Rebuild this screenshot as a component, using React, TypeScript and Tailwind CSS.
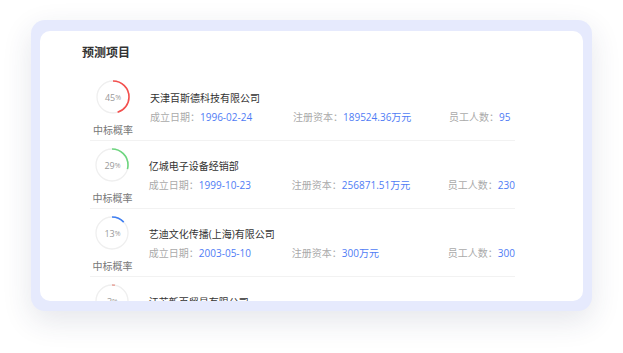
import React from "react";

type Row = {
  pct: number;
  color: string;
  name: string;
  date: string;
  capital: string;
  staff: string;
};

const rows: Row[] = [
  { pct: 45, color: "#f4504e", name: "天津百斯德科技有限公司", date: "1996-02-24", capital: "189524.36万元", staff: "95" },
  { pct: 29, color: "#6dd67f", name: "亿城电子设备经销部", date: "1999-10-23", capital: "256871.51万元", staff: "230" },
  { pct: 13, color: "#3f7ff2", name: "艺迪文化传播(上海)有限公司", date: "2003-05-10", capital: "300万元", staff: "300" },
  { pct: 3, color: "#e8a39a", name: "江苏新百贸易有限公司", date: "2005-08-16", capital: "5000万元", staff: "120" },
];

function Ring({ pct, color }: { pct: number; color: string }) {
  const r = 16;
  const c = 2 * Math.PI * r;
  const len = (pct / 100) * c;
  return (
    <div className="relative w-[34px] h-[34px]">
      <svg width="34" height="34" viewBox="0 0 34 34" className="absolute inset-0">
        <circle cx="17" cy="17" r={r} fill="none" stroke="#efefef" strokeWidth="1.3" />
        <circle
          cx="17"
          cy="17"
          r={r}
          fill="none"
          stroke={color}
          strokeWidth="1.6"
          strokeDasharray={`${len} ${c}`}
          transform="rotate(-90 17 17)"
        />
      </svg>
      <div className="absolute inset-0 flex items-center justify-center text-[9px] text-[#9a9a9a] leading-none">
        {pct}
        <span className="text-[7px]">%</span>
      </div>
    </div>
  );
}

export default function App() {
  return (
    <div
      className="w-[623px] h-[353px] bg-white pt-[20px] pl-[31px]"
      style={{ fontFamily: '"Open Sans", "Noto Sans CJK SC", sans-serif' }}
    >
      <div className="w-[561px] h-[291px] rounded-[14px] bg-[#e6eafd] pt-[11px] px-[9px] shadow-[0_10px_30px_rgba(40,50,90,0.12)]">
        <div className="h-[270px] rounded-[10px] bg-white overflow-hidden pl-[42px]">
          <div className="pt-[14px] h-[42px] text-[12px] leading-[16px] font-semibold text-[#333]">预测项目</div>
          <div className="w-[425px] ml-[8px]">
            {rows.map((row, i) => (
              <div key={i} className="flex h-[68px] border-b border-[#f2f2f2]">
                <div className="w-[46px] flex flex-col items-center pt-[7px]">
                  <Ring pct={row.pct} color={row.color} />
                  <div className="mt-[9px] text-[10px] leading-[14px] text-[#777] whitespace-nowrap">中标概率</div>
                </div>
                <div className="ml-[14px] pt-[17px]">
                  <div className="text-[10px] leading-[16px] text-[#333] whitespace-nowrap">{row.name}</div>
                  <div className="mt-[3px] flex text-[10px] leading-[16px] whitespace-nowrap">
                    <div className="w-[143px] text-[#aaa]">
                      成立日期：<span className="text-[#4f7cf5]">{row.date}</span>
                    </div>
                    <div className="w-[156px] text-[#aaa]">
                      注册资本：<span className="text-[#4f7cf5]">{row.capital}</span>
                    </div>
                    <div className="text-[#aaa]">
                      员工人数：<span className="text-[#4f7cf5]">{row.staff}</span>
                    </div>
                  </div>
                </div>
              </div>
            ))}
          </div>
        </div>
      </div>
    </div>
  );
}
